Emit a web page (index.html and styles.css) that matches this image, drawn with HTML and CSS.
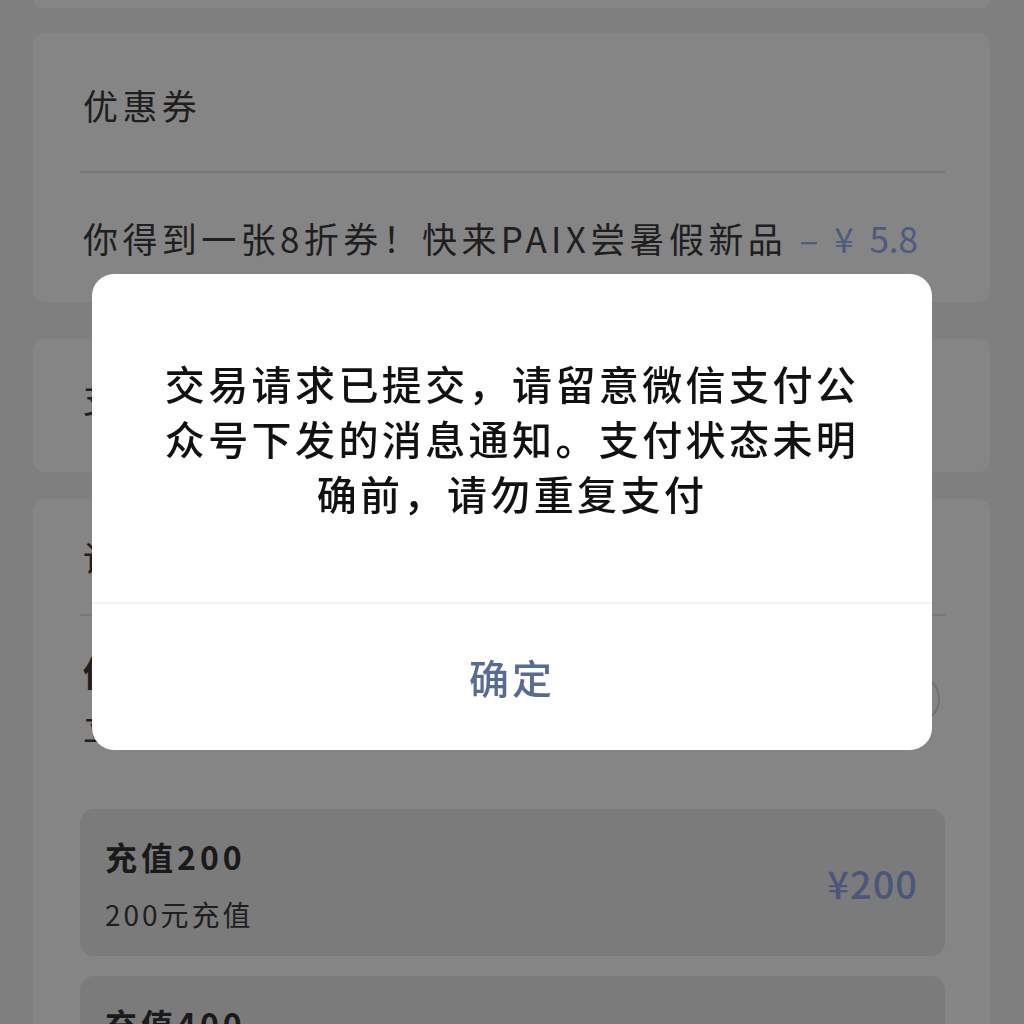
FILE: index.html
```html
<!DOCTYPE html>
<html lang="zh-CN">
<head>
<meta charset="utf-8">
<title>充值</title>
<link rel="stylesheet" href="styles.css">
</head>
<body>
<div class="page">
  <div class="card card-stub"></div>

  <div class="card card-coupon">
    <div class="row row-title">优惠券</div>
    <div class="divider"></div>
    <div class="row row-coupon">
      <span class="coupon-name">你得到一张8折券！快来PAIX尝暑假新品</span>
      <span class="coupon-off">– ¥ 5.8</span>
    </div>
  </div>

  <div class="card card-pay">
    <div class="row row-pay">支付方式</div>
  </div>

  <div class="card card-charge">
    <div class="row row-choose">请选择充值金额</div>
    <div class="divider"></div>
    <div class="row row-balance">
      <div class="balance-text">
        <div class="balance-main">你的余额 ¥0.00</div>
        <div class="balance-sub">立即充值享受更多优惠</div>
      </div>
      <span class="radio"></span>
    </div>

    <div class="option">
      <div class="option-info">
        <div class="option-name">充值200</div>
        <div class="option-desc">200元充值</div>
      </div>
      <div class="option-price">¥200</div>
    </div>
    <div class="option">
      <div class="option-info">
        <div class="option-name">充值400</div>
        <div class="option-desc">400元充值</div>
      </div>
      <div class="option-price">¥400</div>
    </div>
  </div>
</div>

<div class="mask"></div>

<div class="dialog">
  <div class="dialog-body">交易请求已提交，请留意微信支付公众号下发的消息通知。支付状态未明确前，请勿重复支付</div>
  <div class="dialog-foot">
    <button class="dialog-btn" type="button">确定</button>
  </div>
</div>
</body>
</html>
```

FILE: styles.css
```css
* {
  box-sizing: border-box;
}

html, body {
  margin: 0;
  padding: 0;
}

body {
  background: #f3f3f3;
  font-family: "Noto Sans CJK SC", "Noto Sans", sans-serif;
  color: #3c3c3c;
  height: 1024px;
  overflow: hidden;
}

.page {
  padding: 0 34px 0 33px;
  display: flex;
  flex-direction: column;
}

.card {
  background: #fff;
  border-radius: 12px;
}

.card-stub {
  height: 8px;
  border-radius: 0 0 12px 12px;
  margin-bottom: 25px;
}

.card-coupon {
  padding: 0 45px 0 47px;
  margin-bottom: 37px;
}

.row {
  display: flex;
  align-items: center;
  font-size: 35px;
  letter-spacing: 4.4px;
  padding-left: 3px;
}

.row-title {
  height: 138px;
  padding-top: 4px;
}

.divider {
  height: 2px;
  background: #e4e4e4;
}

.row-coupon {
  height: 129px;
  justify-content: space-between;
  padding-right: 27px;
}

.coupon-off {
  color: #94b0ee;
  letter-spacing: 0;
  word-spacing: 8px;
}

.card-pay {
  height: 133px;
  padding: 0 45px 0 47px;
  margin-bottom: 27px;
}

.row-pay {
  height: 117px;
}

.card-charge {
  padding: 0 45px 40px 47px;
  min-height: 600px;
}

.row-choose {
  height: 115px;
}

.row-balance {
  height: 193px;
  justify-content: space-between;
  padding-bottom: 28px;
}

.balance-main {
  font-weight: 700;
  line-height: 55px;
}

.balance-sub {
  font-size: 32px;
  line-height: 55px;
}

.radio {
  width: 50px;
  height: 50px;
  border-radius: 50%;
  border: 2px solid #d8d8d8;
  margin-right: 5px;
}

.option {
  display: flex;
  align-items: center;
  justify-content: space-between;
  height: 147px;
  background: #ececec;
  border-radius: 14px;
  padding: 0 27px 0 25px;
  margin-bottom: 20px;
}

.option-info {
  display: flex;
  flex-direction: column;
  gap: 14px;
}

.option-name {
  font-size: 32px;
  font-weight: 700;
  letter-spacing: 4px;
  line-height: 48px;
  color: #333;
}

.option-desc {
  font-size: 28px;
  letter-spacing: 3px;
  line-height: 40px;
  color: #3c3c3c;
}

.option-price {
  font-size: 38px;
  font-weight: 500;
  letter-spacing: 1px;
  color: #8ea8e6;
}

.mask {
  position: fixed;
  inset: 0;
  background: rgba(0, 0, 0, 0.48);
}

.dialog {
  position: fixed;
  top: 274px;
  left: 92px;
  width: 840px;
  background: #fff;
  border-radius: 22px;
  overflow: hidden;
}

.dialog-body {
  padding: 82px 66px 81px 66px;
  text-align: center;
  font-size: 40px;
  font-weight: 500;
  line-height: 55px;
  letter-spacing: 3.4px;
  color: #111;
  border-bottom: 2px solid #f2f2f2;
}

.dialog-foot {
  height: 146px;
  display: flex;
  align-items: center;
  justify-content: center;
}

.dialog-btn {
  border: 0;
  background: transparent;
  font-family: inherit;
  font-size: 40px;
  font-weight: 500;
  letter-spacing: 3px;
  color: #576b95;
  padding: 0;
  cursor: pointer;
}
```
